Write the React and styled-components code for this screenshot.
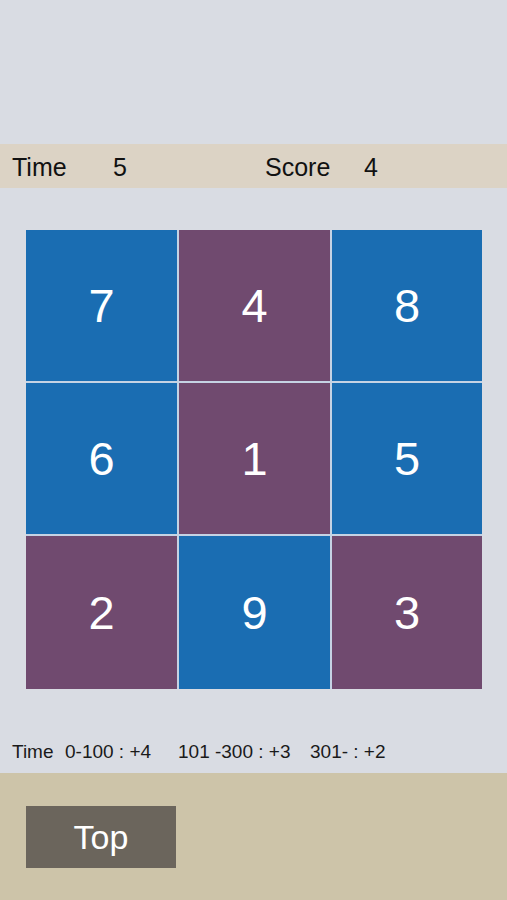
import React from "react";
import styled, { createGlobalStyle } from "styled-components";

const GlobalStyle = createGlobalStyle`
  html, body {
    margin: 0;
    padding: 0;
    background: #d9dce3;
    font-family: "Liberation Sans", Arial, sans-serif;
  }
`;

const cells = [
  { n: 7, c: "blue" },
  { n: 4, c: "purple" },
  { n: 8, c: "blue" },
  { n: 6, c: "blue" },
  { n: 1, c: "purple" },
  { n: 5, c: "blue" },
  { n: 2, c: "purple" },
  { n: 9, c: "blue" },
  { n: 3, c: "purple" },
];

const rules = [
  { text: "Time", w: 53 },
  { text: "0-100 : +4", w: 113 },
  { text: "101 -300 : +3", w: 132 },
  { text: "301- : +2", w: 100 },
];

const App = () => {
  return (
    <S_Page>
      <GlobalStyle />
      <div className="top-space" />
      <S_StatusBar>
        <span className="label">Time</span>
        <span className="value">5</span>
        <span className="label score">Score</span>
        <span className="value">4</span>
      </S_StatusBar>
      <S_Board>
        {cells.map((cell) => (
          <S_Cell key={cell.n} $tone={cell.c}>
            {cell.n}
          </S_Cell>
        ))}
      </S_Board>
      <S_Rule>
        {rules.map((r) => (
          <S_RuleItem key={r.text} $w={r.w}>
            {r.text}
          </S_RuleItem>
        ))}
      </S_Rule>
      <S_Footer>
        <S_Button>Top</S_Button>
      </S_Footer>
    </S_Page>
  );
};

export default App;

const S_Page = styled.div`
  display: flex;
  flex-direction: column;
  width: 507px;
  height: 900px;
  background: #d9dce3;

  .top-space {
    height: 144px;
    flex-shrink: 0;
  }
`;

const S_StatusBar = styled.div`
  display: flex;
  align-items: center;
  flex-shrink: 0;
  height: 44px;
  padding: 3px 0 0 12px;
  box-sizing: border-box;
  background: #dcd3c5;
  color: #111;
  font-size: 25px;

  span {
    flex-shrink: 0;
  }

  .label {
    width: 101px;
  }

  .value {
    width: 152px;
  }

  .score {
    width: 99px;
  }
`;

const S_Board = styled.div`
  display: grid;
  grid-template-columns: 151px 151px 150px;
  grid-template-rows: 151px 151px 153px;
  gap: 2px;
  margin: 42px 0 0 26px;
  width: 456px;
  background: #c5d3e4;
`;

const S_Cell = styled.div`
  display: flex;
  align-items: center;
  justify-content: center;
  background: ${(p) => (p.$tone === "blue" ? "#1a6db2" : "#704a6f")};
  color: #fff;
  font-size: 47px;
  font-weight: 300;
`;

const S_Rule = styled.div`
  display: flex;
  align-items: center;
  flex-shrink: 0;
  height: 84px;
  padding: 42px 0 0 12px;
  box-sizing: border-box;
  color: #1a1a1a;
  font-size: 19px;
`;

const S_RuleItem = styled.span`
  width: ${(p) => p.$w}px;
  flex-shrink: 0;
  white-space: nowrap;
`;

const S_Footer = styled.div`
  flex: 1;
  background: #cdc4a9;
  padding: 33px 0 0 26px;
`;

const S_Button = styled.div`
  display: flex;
  align-items: center;
  justify-content: center;
  width: 150px;
  height: 62px;
  background: #6b655c;
  color: #fff;
  font-size: 34px;
`;
